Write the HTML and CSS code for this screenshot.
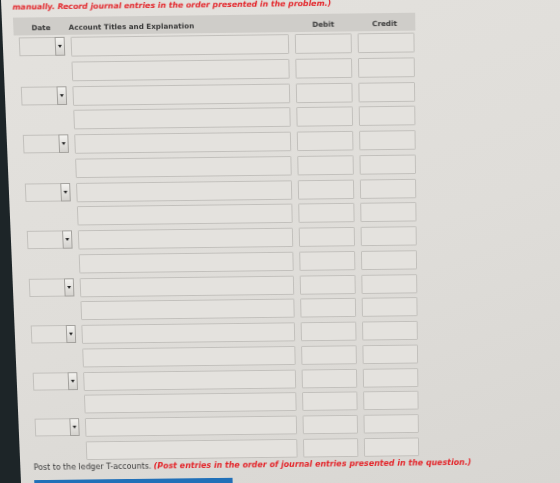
FILE: index.html
```html
<!DOCTYPE html>
<html lang="en">
<head>
    <meta charset="UTF-8">
    <meta name="viewport" content="width=device-width, initial-scale=1.0">
    <title>Journal Entries</title>
    <link rel="stylesheet" href="styles.css">
</head>
<body>
  <div class="sheet">
    <p class="note-top"><em>manually. Record journal entries in the order presented in the problem.)</em></p>

    <div class="journal">
      <div class="journal-head">
        <span class="h-date">Date</span>
        <span class="h-acct">Account Titles and Explanation</span>
        <span class="h-amt">Debit</span>
        <span class="h-amt">Credit</span>
      </div>

      <div class="lines">
        <!-- entry 1 -->
        <div class="line"><div class="date-pick"><div class="date-field"></div><div class="pick-btn"></div></div><div class="field acct"></div><div class="field amt"></div><div class="field amt"></div></div>
        <div class="line"><div class="date-gap"></div><div class="field acct"></div><div class="field amt"></div><div class="field amt"></div></div>
        <!-- entry 2 -->
        <div class="line"><div class="date-pick"><div class="date-field"></div><div class="pick-btn"></div></div><div class="field acct"></div><div class="field amt"></div><div class="field amt"></div></div>
        <div class="line"><div class="date-gap"></div><div class="field acct"></div><div class="field amt"></div><div class="field amt"></div></div>
        <!-- entry 3 -->
        <div class="line"><div class="date-pick"><div class="date-field"></div><div class="pick-btn"></div></div><div class="field acct"></div><div class="field amt"></div><div class="field amt"></div></div>
        <div class="line"><div class="date-gap"></div><div class="field acct"></div><div class="field amt"></div><div class="field amt"></div></div>
        <!-- entry 4 -->
        <div class="line"><div class="date-pick"><div class="date-field"></div><div class="pick-btn"></div></div><div class="field acct"></div><div class="field amt"></div><div class="field amt"></div></div>
        <div class="line"><div class="date-gap"></div><div class="field acct"></div><div class="field amt"></div><div class="field amt"></div></div>
        <!-- entry 5 -->
        <div class="line"><div class="date-pick"><div class="date-field"></div><div class="pick-btn"></div></div><div class="field acct"></div><div class="field amt"></div><div class="field amt"></div></div>
        <div class="line"><div class="date-gap"></div><div class="field acct"></div><div class="field amt"></div><div class="field amt"></div></div>
        <!-- entry 6 -->
        <div class="line"><div class="date-pick"><div class="date-field"></div><div class="pick-btn"></div></div><div class="field acct"></div><div class="field amt"></div><div class="field amt"></div></div>
        <div class="line"><div class="date-gap"></div><div class="field acct"></div><div class="field amt"></div><div class="field amt"></div></div>
        <!-- entry 7 -->
        <div class="line"><div class="date-pick"><div class="date-field"></div><div class="pick-btn"></div></div><div class="field acct"></div><div class="field amt"></div><div class="field amt"></div></div>
        <div class="line"><div class="date-gap"></div><div class="field acct"></div><div class="field amt"></div><div class="field amt"></div></div>
        <!-- entry 8 -->
        <div class="line"><div class="date-pick"><div class="date-field"></div><div class="pick-btn"></div></div><div class="field acct"></div><div class="field amt"></div><div class="field amt"></div></div>
        <div class="line"><div class="date-gap"></div><div class="field acct"></div><div class="field amt"></div><div class="field amt"></div></div>
        <!-- entry 9 -->
        <div class="line"><div class="date-pick"><div class="date-field"></div><div class="pick-btn"></div></div><div class="field acct"></div><div class="field amt"></div><div class="field amt"></div></div>
        <div class="line"><div class="date-gap"></div><div class="field acct"></div><div class="field amt"></div><div class="field amt"></div></div>
      </div>
    </div>

    <p class="post">Post to the ledger T-accounts. <em>(Post entries in the order of journal entries presented in the question.)</em></p>
    <div class="blue-bar"></div>
  </div>
</body>
</html>
```

FILE: styles.css
```css
html, body {
    margin: 0;
    height: 100%;
    overflow: hidden;
}

body {
    background: linear-gradient(160deg, #e4e2de 0%, #dfddd9 55%, #d8d6d2 100%);
    font-family: "DejaVu Sans", Verdana, sans-serif;
    font-size: 7.2px;
    color: #333;
}

/* dark monitor edge on the left */
body::before {
    content: "";
    position: fixed;
    top: 0;
    bottom: 0;
    left: 0;
    width: 24px;
    background: #1d2528;
    clip-path: polygon(0 0, 1px 0, 21px 100%, 0 100%);
    z-index: 2;
}

.sheet {
    width: 560px;
    padding-left: 12px;
    box-sizing: border-box;
    transform-origin: 560px 0;
    transform: perspective(800px) rotateX(-3.5deg) skewY(-0.7deg);
}

em {
    font-weight: bold;
    color: #e3262b;
}

.note-top {
    margin: -4px 0 0 0;
    line-height: 9px;
    font-size: 7.8px;
}

.journal {
    width: 403px;
    margin-top: 6px;
}

.journal-head {
    display: flex;
    align-items: center;
    height: 18px;
    padding-top: 2px;
    box-sizing: border-box;
    background: #cfcdc9;
    font-weight: bold;
    color: #3a3a3a;
}

.h-date {
    width: 56px;
    text-align: center;
}

.h-acct {
    width: 226px;
}

.h-amt {
    width: 62px;
    text-align: center;
}

.lines {
    display: grid;
    row-gap: 4.75px;
    margin-top: 2px;
    padding-left: 5px;
}

.line {
    display: flex;
    height: 20px;
    gap: 6px;
}

.date-pick,
.date-gap {
    display: flex;
    width: 46px;
    height: 19px;
}

.date-field {
    width: 36px;
    border: 1px solid #c2c0bc;
    border-right: none;
    background: #e3e1dd;
    box-sizing: border-box;
}

.pick-btn {
    position: relative;
    width: 10px;
    border: 1px solid #a3a19d;
    background: linear-gradient(#f3f2ef, #d4d2ce);
    box-sizing: border-box;
}

.pick-btn::after {
    content: "";
    position: absolute;
    left: 2px;
    top: 7px;
    border-left: 2px solid transparent;
    border-right: 2px solid transparent;
    border-top: 3px solid #222;
}

.field {
    border: 1px solid #c2c0bc;
    border-radius: 1px;
    background: #e4e2de;
    box-sizing: border-box;
}

.acct {
    width: 219px;
}

.amt {
    width: 57px;
}

.post {
    margin: 2px 0 0 2px;
    line-height: 10px;
    font-size: 8.2px;
    color: #3a3a3a;
}

.blue-bar {
    width: 206px;
    height: 20px;
    margin: 9px 0 0 2px;
    background: #2170b8;
}
```
